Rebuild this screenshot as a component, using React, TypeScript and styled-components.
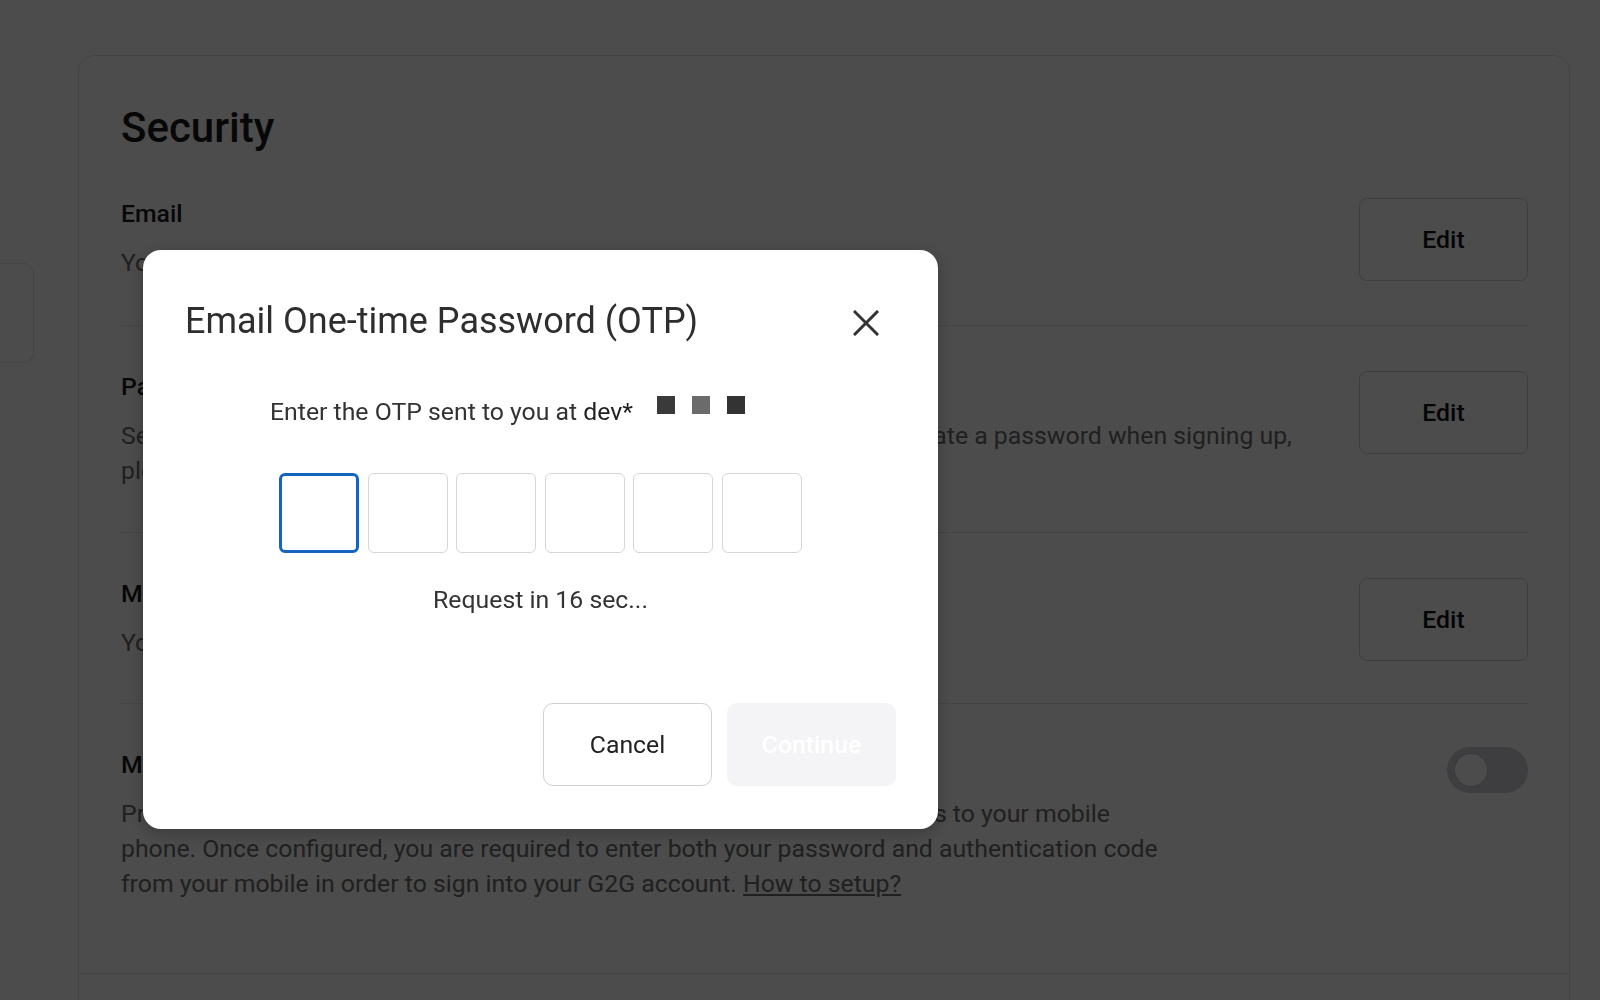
import React from "react";
import styled, { createGlobalStyle } from "styled-components";

//  global

const GlobalStyle = createGlobalStyle`
  html, body {
    margin: 0;
    height: 100%;
  }
  body {
    font-family: Roboto, "Noto Sans", "Liberation Sans", sans-serif;
    background: #ffffff;
    color: #222222;
    overflow: hidden;
  }
  #root {
    height: 100%;
  }
`;

const BODY_SIZE = "24.8px";

//  page behind the dialog

const Page = styled.div`
  box-sizing: border-box;
  height: 100%;
  padding: 55px 30px 0 78px;
`;

const SideTab = styled.div`
  position: fixed;
  left: 0;
  top: 263px;
  width: 34px;
  height: 100px;
  box-sizing: border-box;
  border: 1px solid #e6e6e6;
  border-left: none;
  border-radius: 0 10px 10px 0;
  background: #ffffff;
`;

const Card = styled.div`
  min-height: 1100px;
  background: #ffffff;
  border: 1px solid #e5e5e5;
  border-radius: 16px;
`;

const Section = styled.section`
  padding: 47px 41px 0 42px;
  border-bottom: 1px solid #e5e5e5;
`;

const PageTitle = styled.h1`
  margin: 0;
  font-size: 42px;
  line-height: 50px;
  font-weight: 500;
  color: #1a1a1a;
`;

const Row = styled.div<{ $bottom?: number; $last?: boolean }>`
  display: flex;
  align-items: flex-start;
  justify-content: space-between;
  gap: 40px;
  padding: 45px 0 ${({ $bottom }) => $bottom ?? 44}px;
  border-bottom: ${({ $last }) => ($last ? "none" : "1px solid #e5e5e5")};
`;

const RowText = styled.div<{ $maxWidth?: number }>`
  flex: 1;
  min-width: 0;
  max-width: ${({ $maxWidth }) => ($maxWidth ? `${$maxWidth}px` : "none")};
`;

const RowLabel = styled.div`
  font-size: ${BODY_SIZE};
  line-height: 32px;
  font-weight: 500;
  color: #1a1a1a;
`;

const RowDesc = styled.p`
  margin: 15px 0 0;
  font-size: ${BODY_SIZE};
  line-height: 35px;
  color: #6b6b6b;
`;

const Link = styled.a`
  color: inherit;
  text-decoration: underline;
`;

const EditButton = styled.button`
  flex-shrink: 0;
  width: 169px;
  height: 83px;
  background: #ffffff;
  border: 1.5px solid #d0d0d0;
  border-radius: 8px;
  font-family: inherit;
  font-size: ${BODY_SIZE};
  font-weight: 500;
  color: #111111;
`;

const Toggle = styled.div`
  position: relative;
  flex-shrink: 0;
  width: 81px;
  height: 46px;
  margin-top: -2px;
  border-radius: 23px;
  background: #cfd0d6;
`;

const ToggleKnob = styled.span`
  position: absolute;
  left: 8px;
  top: 7px;
  width: 32px;
  height: 32px;
  border-radius: 50%;
  background: #ffffff;
  box-shadow: 0 0 0 1px rgba(0, 0, 0, 0.06);
`;

//  dialog

const Overlay = styled.div`
  position: fixed;
  inset: 0;
  z-index: 10;
  box-sizing: border-box;
  padding: 250px 0 0 143px;
  background: rgba(0, 0, 0, 0.7);
`;

const Modal = styled.div`
  box-sizing: border-box;
  width: 795px;
  padding: 49px 42px 43px;
  background: #ffffff;
  border-radius: 18px;
  box-shadow: 0 4px 18px rgba(0, 0, 0, 0.25);
`;

const ModalHeader = styled.div`
  display: flex;
  align-items: center;
  justify-content: space-between;
  height: 44px;
`;

const ModalTitle = styled.h2`
  margin: 0;
  font-size: 36px;
  line-height: 44px;
  font-weight: 400;
  color: #2e2e2e;
`;

const CloseButton = styled.button`
  display: flex;
  margin: 3px 17px 0 0;
  padding: 0;
  background: none;
  border: none;
  color: #333333;
`;

const Subtitle = styled.div`
  display: flex;
  justify-content: center;
  align-items: flex-start;
  margin-top: 53px;
  font-size: ${BODY_SIZE};
  line-height: 32px;
  color: #333333;
`;

const Strong = styled.span`
  color: #1f1f1f;
`;

const Masked = styled.span`
  display: flex;
  gap: 17px;
  margin-left: 24px;
  padding-right: 66px;
`;

const MaskBlock = styled.span<{ $shade: string }>`
  width: 18px;
  height: 18px;
  background: ${({ $shade }) => $shade};
`;

const OtpRow = styled.div`
  display: flex;
  justify-content: center;
  gap: 8.5px;
  margin-top: 45px;
`;

const OtpBox = styled.div<{ $active?: boolean }>`
  box-sizing: border-box;
  width: 80px;
  height: 80px;
  border-radius: 6px;
  border: ${({ $active }) =>
    $active ? "3px solid #1565c0" : "1.5px solid #d6d6d6"};
  background: #ffffff;
`;

const Countdown = styled.div`
  margin-top: 31px;
  text-align: center;
  font-size: ${BODY_SIZE};
  line-height: 32px;
  color: #333333;
`;

const Footer = styled.div`
  display: flex;
  justify-content: flex-end;
  gap: 15px;
  margin-top: 87px;
`;

const FooterButton = styled.button<{ $primary?: boolean }>`
  width: 169px;
  height: 83px;
  border-radius: 10px;
  font-family: inherit;
  font-size: ${BODY_SIZE};
  font-weight: ${({ $primary }) => ($primary ? 500 : 400)};
  background: ${({ $primary }) => ($primary ? "#f4f4f6" : "#ffffff")};
  color: ${({ $primary }) => ($primary ? "#ffffff" : "#222222")};
  border: ${({ $primary }) => ($primary ? "none" : "1.5px solid #d0d0d0")};
`;

const CloseIcon = () => (
  <svg width="26" height="26" viewBox="0 0 26 26" fill="none">
    <path
      d="M2 2L24 24M24 2L2 24"
      stroke="currentColor"
      strokeWidth="3"
      strokeLinecap="square"
    />
  </svg>
);

const App = () => {
  const masks = ["#3a3a3a", "#6b6b6b", "#333333"];
  return (
    <>
      <GlobalStyle />
      <Page>
        <SideTab />
        <Card>
          <Section>
            <PageTitle>Security</PageTitle>
            <Row>
              <RowText>
                <RowLabel>Email</RowLabel>
                <RowDesc>Your email address is dev*****@gmail.com</RowDesc>
              </RowText>
              <EditButton>Edit</EditButton>
            </Row>
            <Row>
              <RowText>
                <RowLabel>Password</RowLabel>
                <RowDesc>
                  Secure your account with a strong and unique password. If you did not create a password when signing up,
                  please click Edit to set one.
                </RowDesc>
              </RowText>
              <EditButton>Edit</EditButton>
            </Row>
            <Row $bottom={42}>
              <RowText>
                <RowLabel>Mobile number</RowLabel>
                <RowDesc>You have not added a mobile number yet.</RowDesc>
              </RowText>
              <EditButton>Edit</EditButton>
            </Row>
            <Row $bottom={72} $last>
              <RowText $maxWidth={1048}>
                <RowLabel>Mobile authenticator (2FA)</RowLabel>
                <RowDesc>
                  Protect your account with an authenticator app which sends security codes to your mobile
                  phone. Once configured, you are required to enter both your password and authentication code
                  from your mobile in order to sign into your G2G account. <Link>How to setup?</Link>
                </RowDesc>
              </RowText>
              <Toggle>
                <ToggleKnob />
              </Toggle>
            </Row>
          </Section>
        </Card>
      </Page>

      <Overlay>
        <Modal>
          <ModalHeader>
            <ModalTitle>Email One-time Password (OTP)</ModalTitle>
            <CloseButton aria-label="Close">
              <CloseIcon />
            </CloseButton>
          </ModalHeader>
          <Subtitle>
            <span>
              Enter the OTP sent to you at <Strong>dev*</Strong>
            </span>
            <Masked>
              {masks.map((shade, i) => (
                <MaskBlock key={i} $shade={shade} />
              ))}
            </Masked>
          </Subtitle>
          <OtpRow>
            {[0, 1, 2, 3, 4, 5].map(i => (
              <OtpBox key={i} $active={i === 0} />
            ))}
          </OtpRow>
          <Countdown>Request in 16 sec...</Countdown>
          <Footer>
            <FooterButton>Cancel</FooterButton>
            <FooterButton $primary>Continue</FooterButton>
          </Footer>
        </Modal>
      </Overlay>
    </>
  );
};

export default App;
